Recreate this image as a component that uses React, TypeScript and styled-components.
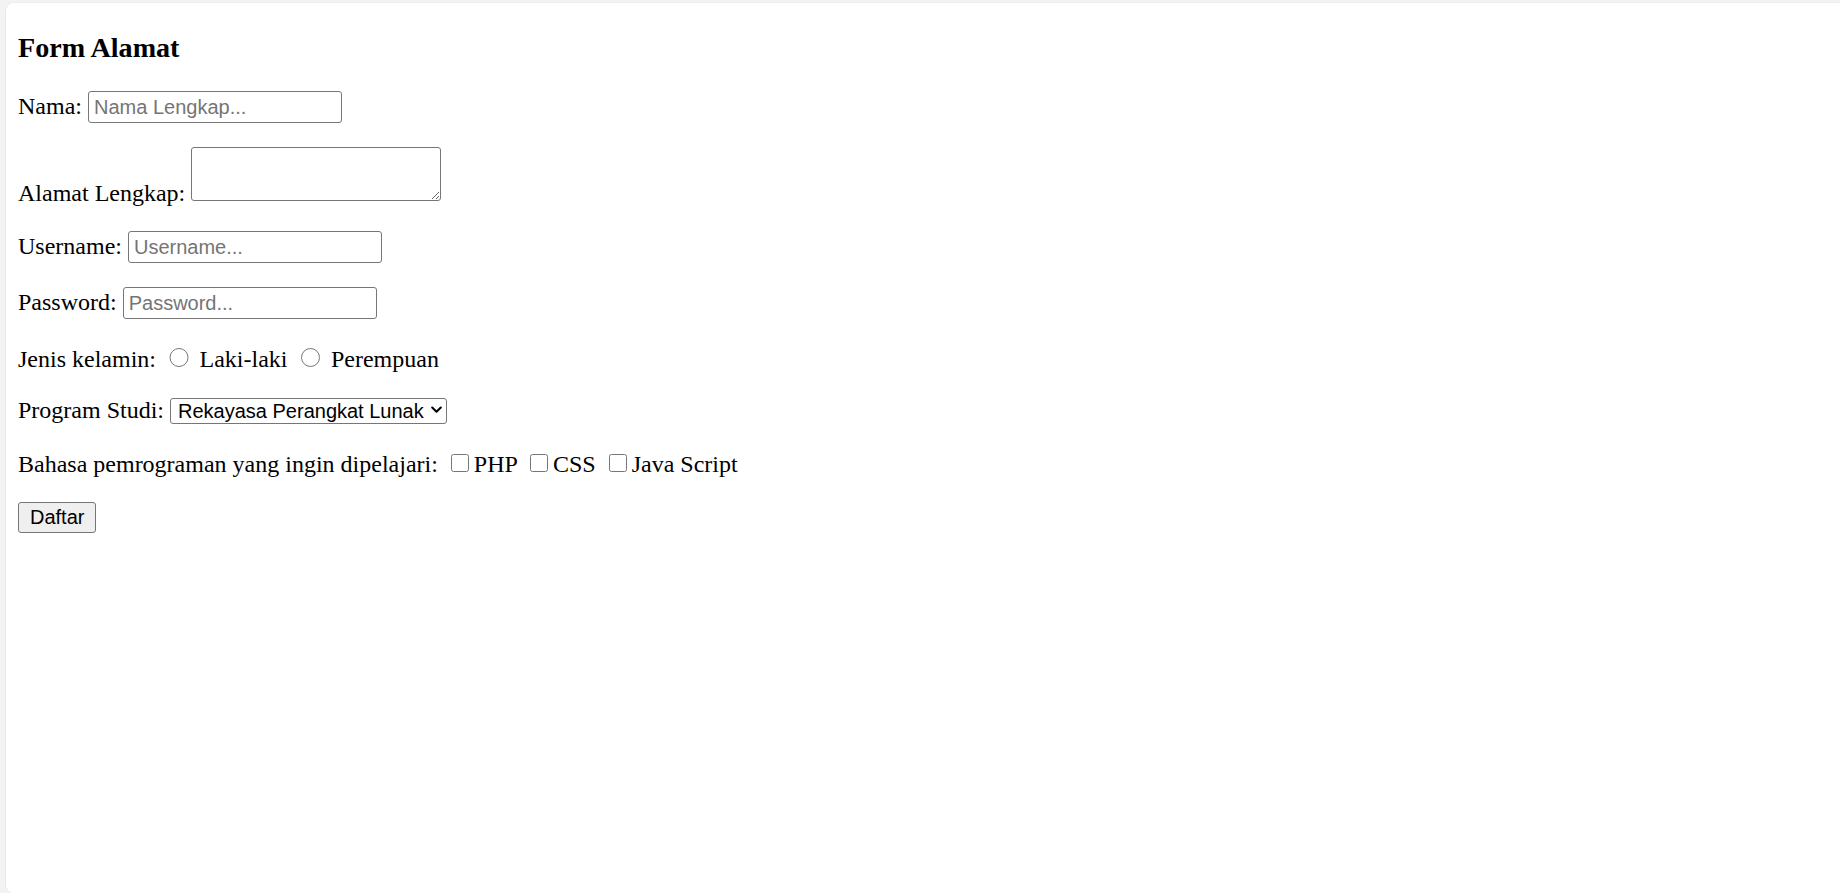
import React from "react";
import styled, { createGlobalStyle } from "styled-components";

const GlobalStyle = createGlobalStyle`
  html, body {
    margin: 0;
    padding: 0;
    background: #f3f3f3;
  }
  body {
    font-family: "Liberation Serif", "Times New Roman", serif;
  }
`;

const Frame = styled.div`
  box-sizing: border-box;
  width: 1840px;
  height: 893px;
  padding: 3px 0 0 6px;
  overflow: hidden;
  background: #f3f3f3;
`;

const Panel = styled.main`
  box-sizing: border-box;
  display: flow-root;
  height: 890px;
  padding: 0 12px;
  background: #ffffff;
  border-radius: 8px 0 0 8px;
  box-shadow: -1px 0 0 #e9e9e9, 0 -1px 0 #ececec;
  color: #000;
  font-family: "Liberation Serif", "Times New Roman", serif;
  font-size: 24px;
`;

const Title = styled.h3`
  margin: 29px 0 27.16px;
  font-size: 28.08px;
  font-weight: bold;
`;

const Field = styled.p`
  margin: 24px 0;
`;

const controlFont = `
  font-family: "Liberation Sans", Arial, sans-serif;
  font-size: 20px;
  color: #000;
`;

const TextInput = styled.input`
  ${controlFont}
  box-sizing: border-box;
  width: 254px;
  height: 32px;
  margin: 0;
  padding: 3.5px 5px;
  border: 1px solid #767676;
  border-radius: 3px;
  background: #fff;
  outline: none;
  &::placeholder {
    color: #757575;
  }
`;

const TextArea = styled.textarea`
  box-sizing: border-box;
  width: 250px;
  height: 54px;
  margin: 0;
  padding: 3px;
  border: 1px solid #767676;
  border-radius: 3px;
  font-family: "Liberation Mono", monospace;
  font-size: 20px;
  vertical-align: baseline;
`;

const Radio = styled.input.attrs({ type: "radio" })`
  width: 19.5px;
  height: 19.5px;
  margin: 4.5px 4.5px 0 7.5px;
`;

const Check = styled.input.attrs({ type: "checkbox" })`
  width: 18px;
  height: 18px;
  margin: 5.5px 5px 4px 7px;
`;

const SelectWrap = styled.span`
  position: relative;
  display: inline-block;
`;

const Select = styled.select`
  ${controlFont}
  appearance: none;
  -webkit-appearance: none;
  box-sizing: border-box;
  width: 277px;
  height: 26.5px;
  margin: 0;
  padding: 0 20px 0 7px;
  border: 1px solid #767676;
  border-radius: 3px;
  background: #fff;
  line-height: 24px;
`;

const Chevron = styled.svg`
  position: absolute;
  right: 5px;
  top: 50%;
  width: 11px;
  height: 8px;
  margin-top: -5px;
  pointer-events: none;
`;

const SubmitButton = styled.button`
  ${controlFont}
  box-sizing: border-box;
  height: 31px;
  margin: 0;
  padding: 0 11px;
  border: 1px solid #767676;
  border-radius: 3px;
  background: #efefef;
`;

export default function App() {
  return (
    <>
      <GlobalStyle />
      <Frame>
        <Panel>
          <Title>Form Alamat</Title>
          <form onSubmit={(e) => e.preventDefault()}>
            <Field>
              Nama: <TextInput type="text" placeholder="Nama Lengkap..." />
            </Field>
            <Field>
              Alamat Lengkap: <TextArea />
            </Field>
            <Field>
              Username: <TextInput type="text" placeholder="Username..." />
            </Field>
            <Field>
              Password: <TextInput type="password" placeholder="Password..." />
            </Field>
            <Field>
              Jenis kelamin: <Radio name="jk" value="L" /> Laki-laki{" "}
              <Radio name="jk" value="P" /> Perempuan
            </Field>
            <Field>
              Program Studi:{" "}
              <SelectWrap>
                <Select defaultValue="rpl">
                  <option value="rpl">Rekayasa Perangkat Lunak</option>
                  <option value="tkj">Teknik Komputer Jaringan</option>
                  <option value="mm">Multimedia</option>
                </Select>
                <Chevron viewBox="0 0 11 8" aria-hidden="true">
                  <polyline
                    points="1.2,1.5 5.5,5.8 9.8,1.5"
                    fill="none"
                    stroke="#000"
                    strokeWidth="2"
                    strokeLinecap="round"
                    strokeLinejoin="round"
                  />
                </Chevron>
              </SelectWrap>
            </Field>
            <Field>
              Bahasa pemrograman yang ingin dipelajari: <Check value="php" />
              PHP <Check value="css" />
              CSS <Check value="js" />
              Java Script
            </Field>
            <SubmitButton type="submit">Daftar</SubmitButton>
          </form>
        </Panel>
      </Frame>
    </>
  );
}
